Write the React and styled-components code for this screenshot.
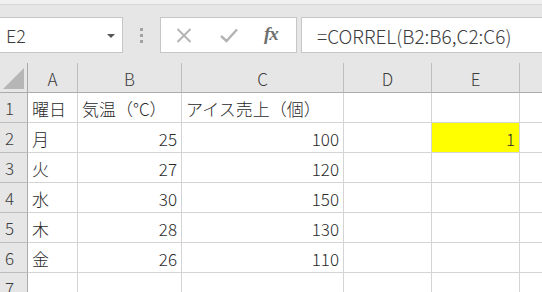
import React from "react";
import styled, { createGlobalStyle } from "styled-components";

const Global = createGlobalStyle`
  html, body { margin: 0; padding: 0; background: #ffffff; }
  body { font-family: "Noto Sans CJK JP", "Noto Sans", sans-serif; font-weight: 300; }
`;

const Screen = styled.div`
  width: 542px;
  height: 292px;
  overflow: hidden;
  background: #ffffff;
`;

const Toolbar = styled.div`
  height: 63px;
  background: #e6e6e6;
  display: flex;
  flex-direction: column;
`;

const TopStrip = styled.div`
  height: 4px;
  background: #f0f0f0;
  border-bottom: 1px solid #d6d6d6;
`;

const ToolRow = styled.div`
  display: flex;
  align-items: stretch;
  height: 36px;
  margin-top: 12px;
`;

const NameBox = styled.div`
  width: 124px;
  margin-left: -1px;
  box-sizing: border-box;
  background: #fff;
  border: 1px solid #c6c6c6;
  display: flex;
  align-items: center;
  justify-content: space-between;
  padding: 0 7px 0 6px;
  font-size: 18px;
  color: #3c3c3c;
`;

const Caret = styled.span`
  width: 0;
  height: 0;
  border-left: 4px solid transparent;
  border-right: 4px solid transparent;
  border-top: 4px solid #555;
  margin-top: 1px;
`;

const Grip = styled.div`
  width: 37px;
  display: flex;
  flex-direction: column;
  align-items: center;
  justify-content: center;
  gap: 3px;
`;

const GripDot = styled.span`
  width: 3px;
  height: 3px;
  background: #a3a3a3;
`;

const ButtonBox = styled.div`
  width: 137px;
  box-sizing: border-box;
  background: #fff;
  border: 1px solid #c6c6c6;
  display: flex;
  align-items: center;
  padding-left: 15px;
`;

const IconSlot = styled.span`
  width: ${(p) => p.$w}px;
  display: flex;
  align-items: center;
`;

const Fx = styled.span`
  font-family: "Liberation Serif", "DejaVu Serif", serif;
  font-style: italic;
  font-weight: bold;
  font-size: 19px;
  color: #6f6f6f;
  letter-spacing: -1px;
  margin-top: -3px;
`;

const FormulaBar = styled.div`
  flex: 1;
  margin-left: 4px;
  margin-right: -2px;
  box-sizing: border-box;
  background: #fff;
  border: 1px solid #c6c6c6;
  display: flex;
  align-items: center;
  padding-left: 15px;
  font-size: 19px;
  color: #3c3c3c;
  white-space: nowrap;
`;

const COLS = [28, 50, 104, 162, 88, 88, 30];

const Grid = styled.div`
  display: grid;
  grid-template-columns: ${COLS.map((c) => c + "px").join(" ")};
  grid-auto-rows: 30px;
  grid-template-rows: 30px;
  font-size: 17px;
  color: #2a2a2a;
`;

const Corner = styled.div`
  background: #e6e6e6;
  border-right: 1px solid #ababab;
  border-bottom: 1px solid #ababab;
  display: flex;
  align-items: flex-end;
  justify-content: flex-end;
  padding: 0 3px 3px 0;
  box-sizing: border-box;
`;

const Triangle = styled.span`
  width: 0;
  height: 0;
  border-left: 21px solid transparent;
  border-bottom: 21px solid #b6b6b6;
`;

const ColHead = styled.div`
  background: #e6e6e6;
  box-sizing: border-box;
  border-right: 1px solid ${(p) => (p.$last ? "transparent" : "#bdbdbd")};
  border-bottom: 1px solid #ababab;
  display: flex;
  align-items: center;
  justify-content: center;
  color: #3c3c3c;
  padding-top: 2px;
`;

const RowHead = styled.div`
  background: #e6e6e6;
  box-sizing: border-box;
  border-right: 1px solid #ababab;
  border-bottom: 1px solid #bdbdbd;
  display: flex;
  align-items: center;
  padding-left: 5px;
  color: #3c3c3c;
`;

const Cell = styled.div`
  box-sizing: border-box;
  border-right: 1px solid #d4d4d4;
  border-bottom: 1px solid #d4d4d4;
  background: ${(p) => (p.$fill ? "#ffff00" : "#fff")};
  display: flex;
  align-items: center;
  justify-content: ${(p) => (p.$num ? "flex-end" : "flex-start")};
  padding: 1px ${(p) => (p.$num ? 4 : 0)}px 0 ${(p) => (p.$num ? 0 : 4)}px;
  white-space: nowrap;
  overflow: visible;
`;

const letters = ["A", "B", "C", "D", "E", ""];

const rows = [
  [["曜日"], ["気温（°C）"], ["アイス売上（個）"], [""], [""], [""]],
  [["月"], ["25", 1], ["100", 1], [""], ["1", 1, 1], [""]],
  [["火"], ["27", 1], ["120", 1], [""], [""], [""]],
  [["水"], ["30", 1], ["150", 1], [""], [""], [""]],
  [["木"], ["28", 1], ["130", 1], [""], [""], [""]],
  [["金"], ["26", 1], ["110", 1], [""], [""], [""]],
  [[""], [""], [""], [""], [""], [""]],
];

export default function App() {
  return (
    <Screen>
      <Global />
      <Toolbar>
        <TopStrip />
        <ToolRow>
          <NameBox>
            <span>E2</span>
            <Caret />
          </NameBox>
          <Grip>
            <GripDot />
            <GripDot />
            <GripDot />
          </Grip>
          <ButtonBox>
            <IconSlot $w={44}>
              <svg width="16" height="15" viewBox="0 0 16 15">
                <path d="M1.5 1 L14.5 14 M14.5 1 L1.5 14" stroke="#b3b3b3" strokeWidth="2" fill="none" />
              </svg>
            </IconSlot>
            <IconSlot $w={44}>
              <svg width="18" height="15" viewBox="0 0 18 15">
                <path d="M1 8 L6.5 13 L17 1.5" stroke="#b3b3b3" strokeWidth="2.4" fill="none" />
              </svg>
            </IconSlot>
            <IconSlot $w={30}>
              <Fx>fx</Fx>
            </IconSlot>
          </ButtonBox>
          <FormulaBar>=CORREL(B2:B6,C2:C6)</FormulaBar>
        </ToolRow>
      </Toolbar>
      <Grid>
        <Corner>
          <Triangle />
        </Corner>
        {letters.map((l, i) => (
          <ColHead key={i} $last={i === letters.length - 1}>
            {l}
          </ColHead>
        ))}
        {rows.map((r, ri) => (
          <React.Fragment key={ri}>
            <RowHead>{ri + 1}</RowHead>
            {r.map(([t, num, fill], ci) => (
              <Cell key={ci} $num={!!num} $fill={!!fill}>
                {t}
              </Cell>
            ))}
          </React.Fragment>
        ))}
      </Grid>
    </Screen>
  );
}
